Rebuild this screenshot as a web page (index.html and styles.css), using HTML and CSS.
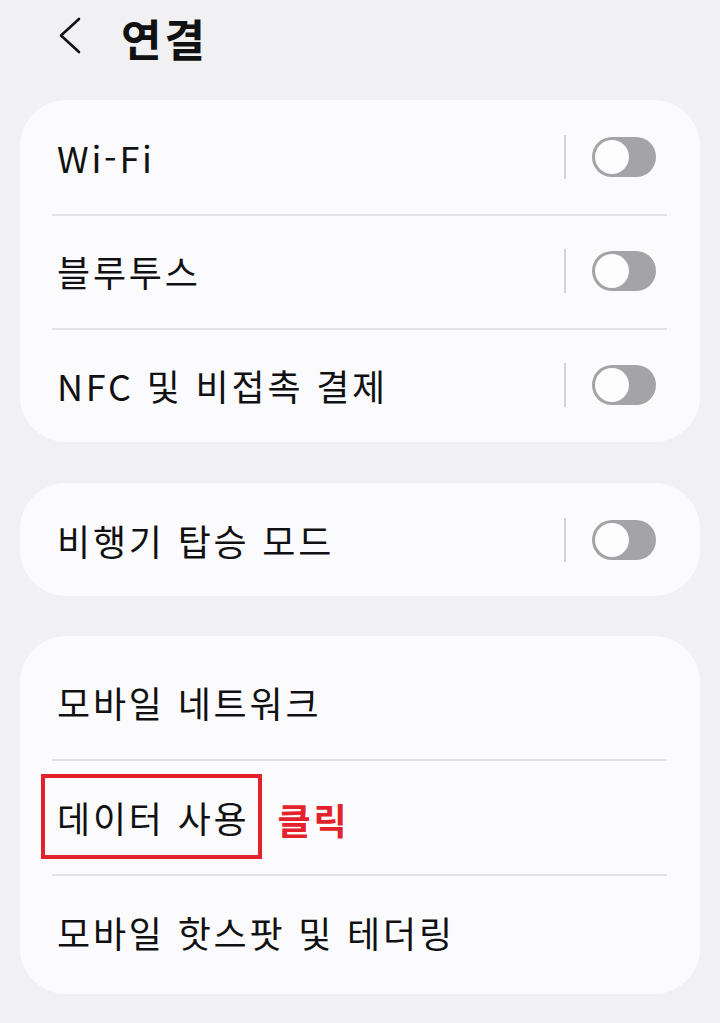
FILE: index.html
```html
<!DOCTYPE html>
<html lang="ko">
<head>
<meta charset="utf-8">
<title>연결</title>
<link rel="stylesheet" href="styles.css">
</head>
<body>
<header class="header">
  <svg class="back" width="24" height="38" viewBox="0 0 24 38"><path d="M21 2 L3 18.5 L21 35" fill="none" stroke="#111" stroke-width="2.6" stroke-linecap="round" stroke-linejoin="round"/></svg>
  <h1 class="title">연결</h1>
</header>
<main class="list">
  <section class="card card-a">
    <div class="row"><span class="label">Wi-Fi</span><span class="sep"></span><span class="toggle"><span class="knob"></span></span></div>
    <div class="row divided"><span class="label">블루투스</span><span class="sep"></span><span class="toggle"><span class="knob"></span></span></div>
    <div class="row divided"><span class="label">NFC 및 비접촉 결제</span><span class="sep"></span><span class="toggle"><span class="knob"></span></span></div>
  </section>
  <section class="card card-b">
    <div class="row row-single"><span class="label">비행기 탑승 모드</span><span class="sep"></span><span class="toggle"><span class="knob"></span></span></div>
  </section>
  <section class="card card-c">
    <div class="row"><span class="label">모바일 네트워크</span></div>
    <div class="row divided row-marked"><span class="label boxed">데이터 사용</span><span class="click">클릭</span></div>
    <div class="row divided"><span class="label">모바일 핫스팟 및 테더링</span></div>
  </section>
</main>
</body>
</html>
```
FILE: styles.css
```css
html, body {
  margin: 0;
  padding: 0;
}
body {
  background: #f1f1f3;
  font-family: "Noto Sans CJK KR", "Noto Sans", sans-serif;
  color: #111;
  width: 720px;
  height: 1023px;
  overflow: hidden;
}
.header {
  height: 100px;
  display: flex;
  align-items: flex-start;
  padding-left: 58px;
  box-sizing: border-box;
}
.back {
  margin-top: 17px;
  flex: none;
}
.title {
  margin: 0 0 0 39px;
  font-size: 44px;
  font-weight: 700;
  line-height: 76px;
  letter-spacing: 3px;
}
.list {
  display: flex;
  flex-direction: column;
  gap: 41px;
  padding: 0 20px;
}
.card {
  background: #fbfbfd;
  border-radius: 46px;
  display: flex;
  flex-direction: column;
}
.card-c {
  padding: 8px 0 5px;
  margin-top: -1px;
}
.row {
  height: 114px;
  display: flex;
  align-items: center;
  padding: 0 44px 0 37px;
  position: relative;
  box-sizing: border-box;
}
.row-single {
  height: 113px;
}
.card-c .row {
  height: 115px;
}
.divided::before {
  content: "";
  position: absolute;
  top: 0;
  left: 32px;
  right: 33px;
  height: 2px;
  background: #e3e3e7;
}
.label {
  font-size: 36px;
  font-weight: 400;
  line-height: 1;
  letter-spacing: 2.8px;
  flex: 1;
  white-space: nowrap;
}
.sep {
  width: 2px;
  height: 44px;
  background: #d4d4d8;
  margin-right: 26px;
  flex: none;
}
.toggle {
  width: 64px;
  height: 40px;
  border-radius: 20px;
  background: #a3a3a8;
  flex: none;
  display: flex;
  align-items: center;
  padding-left: 3px;
  box-sizing: border-box;
}
.knob {
  width: 34px;
  height: 34px;
  border-radius: 50%;
  background: #fdfdfd;
}
.row-marked {
  padding-left: 21px;
}
.boxed {
  flex: none;
  border: 4px solid #e3222c;
  padding: 0 9px 0 12px;
  height: 85px;
  box-sizing: border-box;
  display: flex;
  align-items: center;
}
.click {
  margin-left: 15px;
  font-size: 36px;
  font-weight: 700;
  color: #e3222c;
  line-height: 1;
  letter-spacing: 3px;
  padding-top: 4px;
}
```
